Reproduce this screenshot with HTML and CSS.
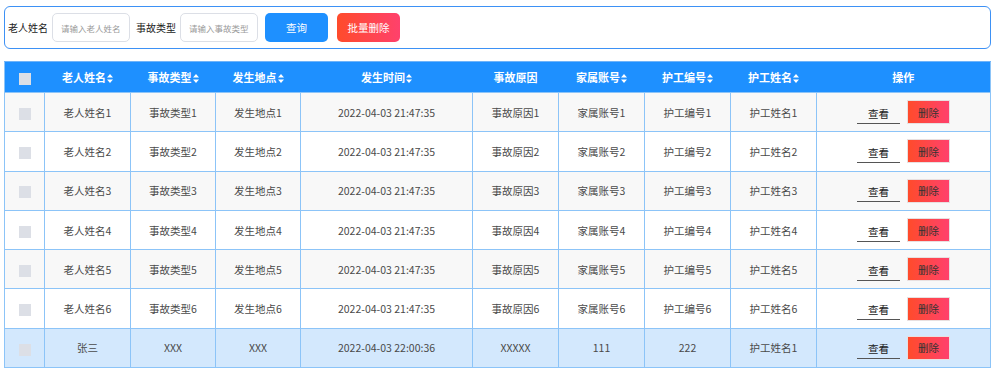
FILE: index.html
```html
<!DOCTYPE html>
<html lang="zh-CN">
  <head>
    <meta charset="utf-8" />
    <title>事故记录</title>
    <link rel="stylesheet" href="styles.css">
  </head>
  <body>
    <form class="search-bar">
      <label class="search-label">老人姓名</label>
      <input class="search-input" placeholder="请输入老人姓名">
      <label class="search-label">事故类型</label>
      <input class="search-input" placeholder="请输入事故类型">
      <button type="button" class="btn btn-query">查询</button>
      <button type="button" class="btn btn-batch">批量删除</button>
    </form>

    <table class="data-table">
      <colgroup>
        <col style="width:40px"><col style="width:86px"><col style="width:85px"><col style="width:85px">
        <col style="width:172px"><col style="width:86px"><col style="width:86px"><col style="width:86px">
        <col style="width:86px"><col>
      </colgroup>
      <thead>
        <tr>
          <th><span class="check"></span></th>
          <th>老人姓名<svg class="sort" viewBox="0 0 6 9"><path d="M3 0L6 3.6H0zM3 9L6 5.4H0z"/></svg></th>
          <th>事故类型<svg class="sort" viewBox="0 0 6 9"><path d="M3 0L6 3.6H0zM3 9L6 5.4H0z"/></svg></th>
          <th>发生地点<svg class="sort" viewBox="0 0 6 9"><path d="M3 0L6 3.6H0zM3 9L6 5.4H0z"/></svg></th>
          <th>发生时间<svg class="sort" viewBox="0 0 6 9"><path d="M3 0L6 3.6H0zM3 9L6 5.4H0z"/></svg></th>
          <th>事故原因</th>
          <th>家属账号<svg class="sort" viewBox="0 0 6 9"><path d="M3 0L6 3.6H0zM3 9L6 5.4H0z"/></svg></th>
          <th>护工编号<svg class="sort" viewBox="0 0 6 9"><path d="M3 0L6 3.6H0zM3 9L6 5.4H0z"/></svg></th>
          <th>护工姓名<svg class="sort" viewBox="0 0 6 9"><path d="M3 0L6 3.6H0zM3 9L6 5.4H0z"/></svg></th>
          <th>操作</th>
        </tr>
      </thead>
      <tbody>
        <tr>
          <td><span class="check"></span></td>
          <td>老人姓名1</td><td>事故类型1</td><td>发生地点1</td><td>2022-04-03 21:47:35</td>
          <td>事故原因1</td><td>家属账号1</td><td>护工编号1</td><td>护工姓名1</td>
          <td><button class="link-btn">查看</button><button class="del-btn">删除</button></td>
        </tr>
        <tr>
          <td><span class="check"></span></td>
          <td>老人姓名2</td><td>事故类型2</td><td>发生地点2</td><td>2022-04-03 21:47:35</td>
          <td>事故原因2</td><td>家属账号2</td><td>护工编号2</td><td>护工姓名2</td>
          <td><button class="link-btn">查看</button><button class="del-btn">删除</button></td>
        </tr>
        <tr>
          <td><span class="check"></span></td>
          <td>老人姓名3</td><td>事故类型3</td><td>发生地点3</td><td>2022-04-03 21:47:35</td>
          <td>事故原因3</td><td>家属账号3</td><td>护工编号3</td><td>护工姓名3</td>
          <td><button class="link-btn">查看</button><button class="del-btn">删除</button></td>
        </tr>
        <tr>
          <td><span class="check"></span></td>
          <td>老人姓名4</td><td>事故类型4</td><td>发生地点4</td><td>2022-04-03 21:47:35</td>
          <td>事故原因4</td><td>家属账号4</td><td>护工编号4</td><td>护工姓名4</td>
          <td><button class="link-btn">查看</button><button class="del-btn">删除</button></td>
        </tr>
        <tr>
          <td><span class="check"></span></td>
          <td>老人姓名5</td><td>事故类型5</td><td>发生地点5</td><td>2022-04-03 21:47:35</td>
          <td>事故原因5</td><td>家属账号5</td><td>护工编号5</td><td>护工姓名5</td>
          <td><button class="link-btn">查看</button><button class="del-btn">删除</button></td>
        </tr>
        <tr>
          <td><span class="check"></span></td>
          <td>老人姓名6</td><td>事故类型6</td><td>发生地点6</td><td>2022-04-03 21:47:35</td>
          <td>事故原因6</td><td>家属账号6</td><td>护工编号6</td><td>护工姓名6</td>
          <td><button class="link-btn">查看</button><button class="del-btn">删除</button></td>
        </tr>
        <tr class="active">
          <td><span class="check"></span></td>
          <td>张三</td><td>XXX</td><td>XXX</td><td>2022-04-03 22:00:36</td>
          <td>XXXXX</td><td>111</td><td>222</td><td>护工姓名1</td>
          <td><button class="link-btn">查看</button><button class="del-btn">删除</button></td>
        </tr>
      </tbody>
    </table>
  </body>
</html>
```

FILE: styles.css
```css
body {
  margin: 0;
  padding: 6px 3px 0 4px;
  font-family: "Noto Sans CJK SC", "Noto Sans", sans-serif;
  font-size: 10.5px;
  color: #333;
  background: #fff;
}
.search-bar {
  display: flex;
  align-items: center;
  height: 41px;
  padding: 0 3px;
  border: 1.5px solid #3d91f5;
  border-radius: 6px;
  margin: 0;
}
.search-label {
  font-size: 10px;
  color: #222;
  margin-right: 4px;
}
.search-input {
  width: 78px;
  height: 29px;
  box-sizing: border-box;
  border: 1px solid #dcdfe6;
  border-radius: 5px;
  padding: 0 8px;
  margin-right: 6px;
  font-family: inherit;
  font-size: 8.5px;
  outline: none;
}
.search-input::placeholder {
  color: #9a9a9a;
}
.btn {
  width: 63px;
  height: 29px;
  border: none;
  border-radius: 5px;
  color: #fff;
  font-family: inherit;
  font-size: 10.5px;
  cursor: pointer;
}
.btn-query {
  background: #1e90ff;
  margin-left: 1px;
  margin-right: 9px;
}
.btn-batch {
  background: linear-gradient(90deg, #ff4b2b, #ff416c);
}
.data-table {
  width: 987px;
  margin-top: 12px;
  border-collapse: collapse;
  table-layout: fixed;
  border: 1px solid #8cc4f8;
}
.data-table th {
  height: 30px;
  background: #1e90ff;
  color: #fff;
  font-size: 11px;
  font-weight: bold;
  text-align: center;
  padding: 0;
  border-top: 1px solid #6fb3f9;
}
.data-table td {
  height: 38.3px;
  padding: 0;
  text-align: center;
  color: #4a4a4a;
  border: 1px solid #8cc4f8;
}
.data-table tbody tr:nth-child(odd) td {
  background: #f8f8f8;
}
.data-table tbody tr.active td {
  background: #d3e8fd;
}
.check {
  display: inline-block;
  width: 12px;
  height: 12px;
  background: #dcdfe6;
  vertical-align: middle;
}
.sort {
  width: 6px;
  height: 9px;
  margin-left: 1px;
  vertical-align: -1px;
  fill: #fff;
}
.link-btn {
  width: 43px;
  height: 23px;
  padding: 3px 0 0;
  margin-right: 7px;
  border: none;
  border-bottom: 1px solid #555;
  background: transparent;
  font-family: inherit;
  font-size: 10.5px;
  color: #222;
  vertical-align: middle;
}
.del-btn {
  width: 43px;
  height: 24px;
  padding: 0;
  border: 1px solid #e8e0e0;
  background: linear-gradient(90deg, #ff4b2b, #ff416c);
  font-family: inherit;
  font-size: 10.5px;
  color: #333;
  vertical-align: middle;
}
```
